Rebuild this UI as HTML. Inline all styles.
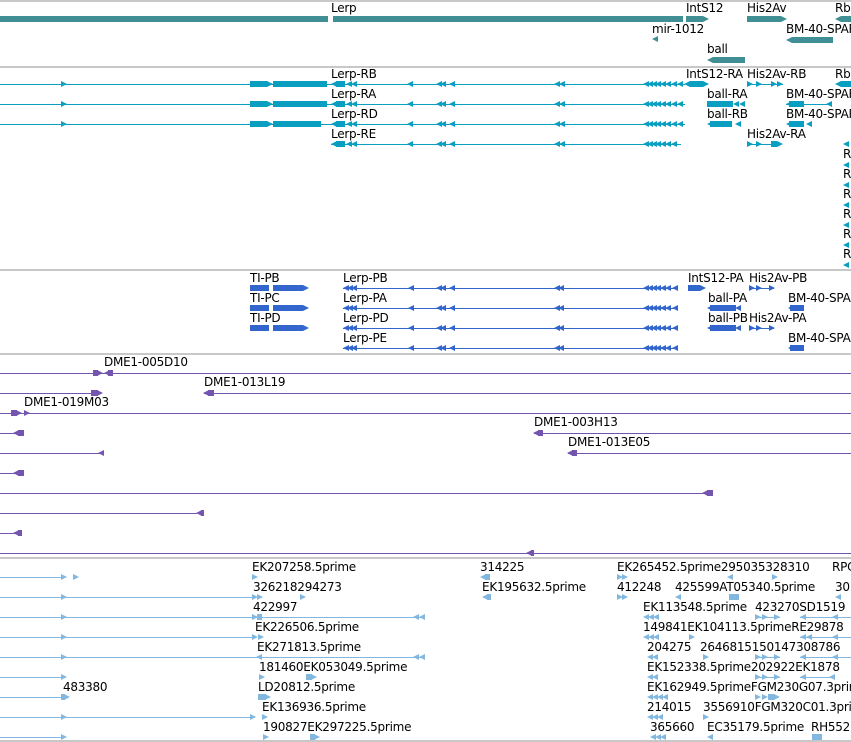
<!DOCTYPE html>
<html><head><meta charset="utf-8"><style>
body{margin:0;width:851px;height:742px;background:#fff;position:relative;overflow:hidden;font-family:"DejaVu Sans","Liberation Sans",sans-serif;}
div{position:absolute}
.t{font-size:12px;letter-spacing:-0.25px;line-height:13px;color:#000;white-space:nowrap;margin-top:1px}
.s{left:0;width:851px;height:2px;background:#c8c8c8}
.l{height:1px}
.b{height:6px}
.ar{width:0;height:0;border-left:6px solid currentColor;border-top:3px solid transparent;border-bottom:3px solid transparent}
.al{width:0;height:0;border-right:6px solid currentColor;border-top:3px solid transparent;border-bottom:3px solid transparent}
.c1{color:#3f8f94}.c1.l,.c1.b{background:#3f8f94}
.c2{color:#0a9fc0}.c2.l,.c2.b{background:#0a9fc0}
.c3{color:#3366cc}.c3.l,.c3.b{background:#3366cc}
.c4{color:#7355b0}.c4.l,.c4.b{background:#7355b0}
.c5{color:#82b8e0}.c5.l,.c5.b{background:#82b8e0}
.r{position:absolute;left:0;width:851px;height:6px}
.r>div{top:0}
</style></head><body>
<div class="s" style="top:0"></div>
<div class="s" style="top:66px"></div>
<div class="s" style="top:269px"></div>
<div class="s" style="top:353px"></div>
<div class="s" style="top:557px"></div>
<div class="s" style="top:740px"></div>

<!-- track 1 -->
<div class="t" style="left:331px;top:1px">Lerp</div>
<div class="b c1" style="left:0;top:16px;width:328px"></div>
<div class="b c1" style="left:333px;top:16px;width:350px"></div>
<div class="t" style="left:686px;top:1px">IntS12</div>
<div class="b c1" style="left:686px;top:16px;width:17px"></div><div class="ar c1" style="left:703px;top:16px"></div>
<div class="t" style="left:747px;top:1px">His2Av</div>
<div class="b c1" style="left:747px;top:16px;width:34px"></div><div class="ar c1" style="left:781px;top:16px"></div>
<div class="t" style="left:835px;top:1px">Rb</div>
<div class="al c1" style="left:835px;top:16px"></div><div class="b c1" style="left:841px;top:16px;width:10px"></div>
<div class="t" style="left:652px;top:22px">mir-1012</div>
<div class="al c1" style="left:652px;top:36px"></div>
<div class="t" style="left:786px;top:22px">BM-40-SPARC</div>
<div class="al c1" style="left:786px;top:37px"></div><div class="b c1" style="left:792px;top:37px;width:41px"></div>
<div class="t" style="left:707px;top:42px">ball</div>
<div class="al c1" style="left:707px;top:57px"></div><div class="b c1" style="left:713px;top:57px;width:32px"></div>

<!-- track 2 -->
<div class="t" style="left:331px;top:67px">Lerp-RB</div>
<div class="t" style="left:331px;top:87px">Lerp-RA</div>
<div class="t" style="left:331px;top:107px">Lerp-RD</div>
<div class="t" style="left:331px;top:127px">Lerp-RE</div>
<div class="l c2" style="left:0;top:84px;width:685px"></div>
<div class="l c2" style="left:0;top:104px;width:685px"></div>
<div class="l c2" style="left:0;top:124px;width:685px"></div>
<div class="l c2" style="left:331px;top:144px;width:350px"></div>
<div class="ar c2" style="left:61px;top:81px"></div><div class="ar c2" style="left:61px;top:101px"></div><div class="ar c2" style="left:61px;top:121px"></div>
<div class="b c2" style="left:250px;top:81px;width:17px"></div><div class="ar c2" style="left:267px;top:81px"></div><div class="b c2" style="left:273px;top:81px;width:54px"></div>
<div class="b c2" style="left:250px;top:101px;width:17px"></div><div class="ar c2" style="left:267px;top:101px"></div><div class="b c2" style="left:273px;top:101px;width:54px"></div>
<div class="b c2" style="left:250px;top:121px;width:17px"></div><div class="ar c2" style="left:267px;top:121px"></div><div class="b c2" style="left:273px;top:121px;width:48px"></div>
<div class="al c2" style="left:331px;top:81px"></div><div class="b c2" style="left:336px;top:81px;width:9px"></div>
<div class="al c2" style="left:331px;top:101px"></div><div class="b c2" style="left:336px;top:101px;width:9px"></div>
<div class="al c2" style="left:331px;top:121px"></div><div class="b c2" style="left:336px;top:121px;width:9px"></div>
<div class="al c2" style="left:331px;top:141px"></div><div class="b c2" style="left:336px;top:141px;width:9px"></div>
<!-- small arrows on transcripts -->
<div class="r c2" style="top:81px"><div class="al" style="left:346px"></div><div class="al" style="left:351px"></div><div class="al" style="left:407px"></div><div class="al" style="left:436px"></div><div class="al" style="left:440px"></div><div class="al" style="left:449px"></div><div class="al" style="left:554px"></div><div class="al" style="left:559px"></div><div class="al" style="left:643px"></div><div class="al" style="left:647px"></div><div class="al" style="left:651px"></div><div class="al" style="left:655px"></div><div class="al" style="left:660px"></div><div class="al" style="left:665px"></div><div class="al" style="left:671px"></div><div class="al" style="left:677px"></div></div>
<div class="r c2" style="top:101px"><div class="al" style="left:346px"></div><div class="al" style="left:351px"></div><div class="al" style="left:407px"></div><div class="al" style="left:436px"></div><div class="al" style="left:440px"></div><div class="al" style="left:449px"></div><div class="al" style="left:554px"></div><div class="al" style="left:559px"></div><div class="al" style="left:643px"></div><div class="al" style="left:647px"></div><div class="al" style="left:651px"></div><div class="al" style="left:655px"></div><div class="al" style="left:660px"></div><div class="al" style="left:665px"></div><div class="al" style="left:671px"></div><div class="al" style="left:677px"></div></div>
<div class="r c2" style="top:121px"><div class="al" style="left:346px"></div><div class="al" style="left:351px"></div><div class="al" style="left:407px"></div><div class="al" style="left:436px"></div><div class="al" style="left:440px"></div><div class="al" style="left:449px"></div><div class="al" style="left:554px"></div><div class="al" style="left:559px"></div><div class="al" style="left:643px"></div><div class="al" style="left:647px"></div><div class="al" style="left:651px"></div><div class="al" style="left:655px"></div><div class="al" style="left:660px"></div><div class="al" style="left:665px"></div><div class="al" style="left:671px"></div><div class="al" style="left:677px"></div></div>
<div class="r c2" style="top:141px"><div class="al" style="left:346px"></div><div class="al" style="left:351px"></div><div class="al" style="left:407px"></div><div class="al" style="left:436px"></div><div class="al" style="left:440px"></div><div class="al" style="left:449px"></div><div class="al" style="left:554px"></div><div class="al" style="left:559px"></div><div class="al" style="left:643px"></div><div class="al" style="left:647px"></div><div class="al" style="left:651px"></div><div class="al" style="left:655px"></div><div class="al" style="left:660px"></div><div class="al" style="left:665px"></div><div class="al" style="left:671px"></div><div class="b" style="left:675px;width:6px"></div></div>
<div class="t" style="left:686px;top:67px">IntS12-RA</div><div class="t" style="left:747px;top:67px">His2Av-RB</div><div class="t" style="left:835px;top:67px">Rb</div>
<div class="b c2" style="left:690px;top:81px;width:13px"></div><div class="ar c2" style="left:703px;top:81px"></div><div class="al c2" style="left:684px;top:81px"></div>
<div class="l c2" style="left:747px;top:84px;width:36px"></div>
<div class="ar c2" style="left:747px;top:81px"></div><div class="ar c2" style="left:756px;top:81px"></div><div class="ar c2" style="left:771px;top:81px"></div><div class="ar c2" style="left:777px;top:81px"></div>
<div class="al c2" style="left:835px;top:81px"></div><div class="b c2" style="left:841px;top:81px;width:10px"></div>
<div class="t" style="left:707px;top:87px">ball-RA</div><div class="t" style="left:786px;top:87px">BM-40-SPARC</div>
<div class="b c2" style="left:707px;top:101px;width:26px"></div><div class="al c2" style="left:733px;top:101px"></div><div class="al c2" style="left:739px;top:101px"></div>
<div class="l c2" style="left:786px;top:104px;width:45px"></div><div class="b c2" style="left:789px;top:101px;width:15px"></div><div class="al c2" style="left:786px;top:101px"></div><div class="al c2" style="left:826px;top:101px"></div>
<div class="t" style="left:707px;top:107px">ball-RB</div><div class="t" style="left:786px;top:107px">BM-40-SPARC</div>
<div class="b c2" style="left:710px;top:121px;width:22px"></div><div class="al c2" style="left:707px;top:121px"></div><div class="al c2" style="left:735px;top:121px"></div>
<div class="b c2" style="left:789px;top:121px;width:15px"></div><div class="al c2" style="left:786px;top:121px"></div><div class="al c2" style="left:806px;top:121px"></div>
<div class="t" style="left:747px;top:127px">His2Av-RA</div>
<div class="l c2" style="left:747px;top:144px;width:30px"></div><div class="ar c2" style="left:747px;top:141px"></div><div class="ar c2" style="left:756px;top:141px"></div><div class="b c2" style="left:771px;top:141px;width:6px"></div><div class="ar c2" style="left:777px;top:141px"></div>
<div class="t" style="left:843px;top:147px">R</div><div class="t" style="left:843px;top:167px">R</div><div class="t" style="left:843px;top:187px">R</div><div class="t" style="left:843px;top:207px">R</div><div class="t" style="left:843px;top:227px">R</div><div class="t" style="left:843px;top:247px">R</div>
<div class="al c2" style="left:843px;top:141px"></div>
<div class="al c2" style="left:843px;top:162px"></div><div class="al c2" style="left:843px;top:182px"></div><div class="al c2" style="left:843px;top:202px"></div><div class="al c2" style="left:843px;top:222px"></div><div class="al c2" style="left:843px;top:242px"></div><div class="al c2" style="left:843px;top:262px"></div>

<!-- track 3 -->
<div class="t" style="left:250px;top:271px">TI-PB</div><div class="t" style="left:250px;top:291px">TI-PC</div><div class="t" style="left:250px;top:311px">TI-PD</div>
<div class="b c3" style="left:250px;top:285px;width:19px"></div><div class="b c3" style="left:273px;top:285px;width:30px"></div><div class="ar c3" style="left:303px;top:285px"></div>
<div class="b c3" style="left:250px;top:305px;width:19px"></div><div class="b c3" style="left:273px;top:305px;width:30px"></div><div class="ar c3" style="left:303px;top:305px"></div>
<div class="b c3" style="left:250px;top:325px;width:19px"></div><div class="b c3" style="left:273px;top:325px;width:30px"></div><div class="ar c3" style="left:303px;top:325px"></div>
<div class="t" style="left:343px;top:271px">Lerp-PB</div><div class="t" style="left:343px;top:291px">Lerp-PA</div><div class="t" style="left:343px;top:311px">Lerp-PD</div><div class="t" style="left:343px;top:331px">Lerp-PE</div>
<div class="l c3" style="left:343px;top:288px;width:335px"></div><div class="l c3" style="left:343px;top:308px;width:335px"></div><div class="l c3" style="left:343px;top:328px;width:335px"></div><div class="l c3" style="left:343px;top:348px;width:335px"></div>
<div class="r c3" style="top:285px"><div class="al" style="left:343px"></div><div class="al" style="left:347px"></div><div class="al" style="left:351px"></div><div class="al" style="left:408px"></div><div class="al" style="left:436px"></div><div class="al" style="left:440px"></div><div class="al" style="left:449px"></div><div class="al" style="left:554px"></div><div class="al" style="left:558px"></div><div class="al" style="left:643px"></div><div class="al" style="left:647px"></div><div class="al" style="left:651px"></div><div class="al" style="left:655px"></div><div class="al" style="left:660px"></div><div class="al" style="left:665px"></div><div class="al" style="left:672px"></div></div>
<div class="r c3" style="top:305px"><div class="al" style="left:343px"></div><div class="al" style="left:347px"></div><div class="al" style="left:351px"></div><div class="al" style="left:408px"></div><div class="al" style="left:436px"></div><div class="al" style="left:440px"></div><div class="al" style="left:449px"></div><div class="al" style="left:554px"></div><div class="al" style="left:558px"></div><div class="al" style="left:643px"></div><div class="al" style="left:647px"></div><div class="al" style="left:651px"></div><div class="al" style="left:655px"></div><div class="al" style="left:660px"></div><div class="al" style="left:665px"></div><div class="al" style="left:672px"></div></div>
<div class="r c3" style="top:325px"><div class="al" style="left:343px"></div><div class="al" style="left:347px"></div><div class="al" style="left:351px"></div><div class="al" style="left:408px"></div><div class="al" style="left:436px"></div><div class="al" style="left:440px"></div><div class="al" style="left:449px"></div><div class="al" style="left:554px"></div><div class="al" style="left:558px"></div><div class="al" style="left:643px"></div><div class="al" style="left:647px"></div><div class="al" style="left:651px"></div><div class="al" style="left:655px"></div><div class="al" style="left:660px"></div><div class="al" style="left:665px"></div><div class="al" style="left:672px"></div></div>
<div class="r c3" style="top:345px"><div class="al" style="left:343px"></div><div class="al" style="left:347px"></div><div class="al" style="left:351px"></div><div class="al" style="left:408px"></div><div class="al" style="left:436px"></div><div class="al" style="left:440px"></div><div class="al" style="left:449px"></div><div class="al" style="left:554px"></div><div class="al" style="left:558px"></div><div class="al" style="left:643px"></div><div class="al" style="left:647px"></div><div class="al" style="left:651px"></div><div class="al" style="left:655px"></div><div class="al" style="left:660px"></div><div class="al" style="left:665px"></div><div class="al" style="left:672px"></div></div>
<div class="t" style="left:688px;top:271px">IntS12-PA</div><div class="t" style="left:749px;top:271px">His2Av-PB</div>
<div class="b c3" style="left:688px;top:285px;width:12px"></div><div class="ar c3" style="left:700px;top:285px"></div>
<div class="l c3" style="left:749px;top:288px;width:25px"></div><div class="ar c3" style="left:749px;top:285px"></div><div class="ar c3" style="left:756px;top:285px"></div><div class="ar c3" style="left:769px;top:285px"></div>
<div class="t" style="left:708px;top:291px">ball-PA</div><div class="t" style="left:788px;top:291px">BM-40-SPARC</div>
<div class="b c3" style="left:710px;top:305px;width:26px"></div><div class="al c3" style="left:707px;top:305px"></div><div class="al c3" style="left:735px;top:305px"></div>
<div class="b c3" style="left:790px;top:305px;width:14px"></div><div class="al c3" style="left:788px;top:305px"></div>
<div class="t" style="left:708px;top:311px">ball-PB</div><div class="t" style="left:749px;top:311px">His2Av-PA</div>
<div class="b c3" style="left:710px;top:325px;width:26px"></div><div class="al c3" style="left:707px;top:325px"></div><div class="al c3" style="left:735px;top:325px"></div>
<div class="l c3" style="left:749px;top:328px;width:25px"></div><div class="ar c3" style="left:749px;top:325px"></div><div class="ar c3" style="left:756px;top:325px"></div><div class="ar c3" style="left:769px;top:325px"></div>
<div class="t" style="left:788px;top:331px">BM-40-SPARC</div>
<div class="b c3" style="left:790px;top:345px;width:14px"></div><div class="al c3" style="left:788px;top:345px"></div>

<!-- track 4 -->
<div class="t" style="left:104px;top:355px">DME1-005D10</div>
<div class="l c4" style="left:0;top:373px;width:851px"></div><div class="b c4" style="left:93px;top:370px;width:5px"></div><div class="ar c4" style="left:97px;top:370px"></div><div class="al c4" style="left:104px;top:370px"></div><div class="b c4" style="left:108px;top:370px;width:5px"></div>
<div class="t" style="left:204px;top:375px">DME1-013L19</div>
<div class="l c4" style="left:0;top:393px;width:92px"></div><div class="b c4" style="left:91px;top:390px;width:7px"></div><div class="ar c4" style="left:97px;top:390px"></div>
<div class="l c4" style="left:204px;top:393px;width:647px"></div><div class="al c4" style="left:203px;top:390px"></div><div class="b c4" style="left:208px;top:390px;width:6px"></div>
<div class="t" style="left:24px;top:395px">DME1-019M03</div>
<div class="l c4" style="left:0;top:413px;width:851px"></div><div class="b c4" style="left:11px;top:410px;width:6px"></div><div class="ar c4" style="left:16px;top:410px"></div><div class="ar c4" style="left:24px;top:410px"></div>
<div class="l c4" style="left:0;top:433px;width:16px"></div><div class="al c4" style="left:13px;top:430px"></div><div class="b c4" style="left:18px;top:430px;width:6px"></div>
<div class="t" style="left:534px;top:415px">DME1-003H13</div>
<div class="l c4" style="left:534px;top:433px;width:317px"></div><div class="al c4" style="left:533px;top:430px"></div><div class="b c4" style="left:538px;top:430px;width:5px"></div>
<div class="l c4" style="left:0;top:453px;width:100px"></div><div class="al c4" style="left:98px;top:450px"></div>
<div class="t" style="left:568px;top:435px">DME1-013E05</div>
<div class="l c4" style="left:568px;top:453px;width:283px"></div><div class="al c4" style="left:567px;top:450px"></div><div class="b c4" style="left:572px;top:450px;width:5px"></div>
<div class="l c4" style="left:0;top:473px;width:16px"></div><div class="al c4" style="left:13px;top:470px"></div><div class="b c4" style="left:18px;top:470px;width:6px"></div>
<div class="l c4" style="left:0;top:493px;width:705px"></div><div class="al c4" style="left:702px;top:490px"></div><div class="b c4" style="left:707px;top:490px;width:6px"></div>
<div class="l c4" style="left:0;top:513px;width:197px"></div><div class="al c4" style="left:196px;top:510px"></div><div class="b c4" style="left:201px;top:510px;width:3px"></div>
<div class="l c4" style="left:0;top:533px;width:16px"></div><div class="al c4" style="left:13px;top:530px"></div><div class="b c4" style="left:18px;top:530px;width:4px"></div>
<div class="l c4" style="left:0;top:553px;width:851px"></div><div class="al c4" style="left:526px;top:550px"></div><div class="b c4" style="left:531px;top:550px;width:3px"></div>

<!-- track 5 -->
<div class="l c5" style="left:0;top:577px;width:63px"></div><div class="ar c5" style="left:61px;top:574px"></div><div class="ar c5" style="left:73px;top:574px"></div>
<div class="l c5" style="left:0;top:597px;width:255px"></div><div class="ar c5" style="left:61px;top:594px"></div>
<div class="l c5" style="left:0;top:617px;width:425px"></div><div class="ar c5" style="left:61px;top:614px"></div><div class="al c5" style="left:413px;top:614px"></div><div class="al c5" style="left:419px;top:614px"></div>
<div class="l c5" style="left:0;top:637px;width:255px"></div><div class="ar c5" style="left:61px;top:634px"></div>
<div class="l c5" style="left:0;top:657px;width:425px"></div><div class="ar c5" style="left:61px;top:654px"></div><div class="al c5" style="left:413px;top:654px"></div><div class="al c5" style="left:419px;top:654px"></div>
<div class="l c5" style="left:0;top:677px;width:63px"></div><div class="ar c5" style="left:61px;top:674px"></div>
<div class="l c5" style="left:0;top:697px;width:63px"></div><div class="b c5" style="left:61px;top:694px;width:4px"></div><div class="ar c5" style="left:64px;top:694px"></div>
<div class="l c5" style="left:0;top:717px;width:255px"></div><div class="ar c5" style="left:61px;top:714px"></div><div class="ar c5" style="left:250px;top:714px"></div>
<div class="l c5" style="left:0;top:737px;width:63px"></div><div class="ar c5" style="left:61px;top:734px"></div>

<div class="t" style="left:252px;top:560px">EK207258.5prime</div>
<div class="t" style="left:480px;top:560px">314225</div>
<div class="t" style="left:617px;top:560px">EK265452.5prime295035328310</div>
<div class="t" style="left:832px;top:560px">RPC</div>
<div class="t" style="left:253px;top:580px">326218294273</div>
<div class="t" style="left:482px;top:580px">EK195632.5prime</div>
<div class="t" style="left:617px;top:580px">412248</div>
<div class="t" style="left:675px;top:580px">425599AT05340.5prime</div>
<div class="t" style="left:835px;top:580px">30</div>
<div class="t" style="left:253px;top:600px">422997</div>
<div class="t" style="left:643px;top:600px">EK113548.5prime</div>
<div class="t" style="left:755px;top:600px">423270SD1519</div>
<div class="t" style="left:255px;top:620px">EK226506.5prime</div>
<div class="t" style="left:643px;top:620px">149841EK104113.5primeRE29878</div>
<div class="t" style="left:257px;top:640px">EK271813.5prime</div>
<div class="t" style="left:647px;top:640px">204275</div>
<div class="t" style="left:700px;top:640px">2646815150147308786</div>
<div class="t" style="left:259px;top:660px">181460EK053049.5prime</div>
<div class="t" style="left:647px;top:660px">EK152338.5prime202922EK1878</div>
<div class="t" style="left:63px;top:680px">483380</div>
<div class="t" style="left:258px;top:680px">LD20812.5prime</div>
<div class="t" style="left:647px;top:680px">EK162949.5primeFGM230G07.3prime</div>
<div class="t" style="left:262px;top:700px">EK136936.5prime</div>
<div class="t" style="left:647px;top:700px">214015</div>
<div class="t" style="left:703px;top:700px">3556910FGM320C01.3prime</div>
<div class="t" style="left:263px;top:720px">190827EK297225.5prime</div>
<div class="t" style="left:650px;top:720px">365660</div>
<div class="t" style="left:707px;top:720px">EC35179.5prime</div>
<div class="t" style="left:811px;top:720px">RH552</div>

<!-- track5 small glyphs -->
<div class="ar c5" style="left:252px;top:574px"></div>
<div class="al c5" style="left:480px;top:574px"></div><div class="b c5" style="left:485px;top:574px;width:5px"></div>
<div class="ar c5" style="left:617px;top:574px"></div><div class="ar c5" style="left:622px;top:574px"></div>
<div class="al c5" style="left:727px;top:574px"></div><div class="ar c5" style="left:772px;top:574px"></div>
<div class="ar c5" style="left:252px;top:594px"></div><div class="ar c5" style="left:257px;top:594px"></div><div class="ar c5" style="left:300px;top:594px"></div>
<div class="al c5" style="left:482px;top:594px"></div><div class="b c5" style="left:487px;top:594px;width:4px"></div>
<div class="ar c5" style="left:617px;top:594px"></div><div class="ar c5" style="left:622px;top:594px"></div>
<div class="al c5" style="left:675px;top:594px"></div><div class="b c5" style="left:729px;top:594px;width:10px"></div><div class="al c5" style="left:835px;top:594px"></div>
<div class="ar c5" style="left:252px;top:614px"></div><div class="b c5" style="left:257px;top:614px;width:5px"></div>
<div class="al c5" style="left:643px;top:614px"></div><div class="al c5" style="left:648px;top:614px"></div><div class="al c5" style="left:653px;top:614px"></div>
<div class="l c5" style="left:755px;top:617px;width:25px"></div><div class="ar c5" style="left:755px;top:614px"></div><div class="ar c5" style="left:762px;top:614px"></div><div class="ar c5" style="left:774px;top:614px"></div>
<div class="l c5" style="left:800px;top:617px;width:51px"></div><div class="al c5" style="left:800px;top:614px"></div><div class="al c5" style="left:832px;top:614px"></div>
<div class="ar c5" style="left:252px;top:634px"></div><div class="ar c5" style="left:258px;top:634px"></div>
<div class="al c5" style="left:643px;top:634px"></div><div class="al c5" style="left:648px;top:634px"></div><div class="al c5" style="left:653px;top:634px"></div><div class="ar c5" style="left:689px;top:634px"></div>
<div class="l c5" style="left:800px;top:637px;width:51px"></div><div class="al c5" style="left:800px;top:634px"></div><div class="al c5" style="left:806px;top:634px"></div><div class="al c5" style="left:832px;top:634px"></div>
<div class="al c5" style="left:256px;top:654px"></div>
<div class="al c5" style="left:647px;top:654px"></div><div class="al c5" style="left:652px;top:654px"></div><div class="ar c5" style="left:703px;top:654px"></div>
<div class="l c5" style="left:755px;top:657px;width:25px"></div><div class="ar c5" style="left:755px;top:654px"></div><div class="ar c5" style="left:762px;top:654px"></div><div class="ar c5" style="left:774px;top:654px"></div>
<div class="l c5" style="left:800px;top:657px;width:51px"></div><div class="al c5" style="left:800px;top:654px"></div><div class="al c5" style="left:832px;top:654px"></div>
<div class="ar c5" style="left:259px;top:674px"></div><div class="b c5" style="left:306px;top:674px;width:6px"></div><div class="ar c5" style="left:311px;top:674px"></div>
<div class="al c5" style="left:647px;top:674px"></div><div class="al c5" style="left:652px;top:674px"></div>
<div class="l c5" style="left:755px;top:677px;width:25px"></div><div class="ar c5" style="left:755px;top:674px"></div><div class="ar c5" style="left:762px;top:674px"></div><div class="ar c5" style="left:774px;top:674px"></div>
<div class="l c5" style="left:800px;top:677px;width:35px"></div><div class="al c5" style="left:800px;top:674px"></div><div class="al c5" style="left:829px;top:674px"></div>
<div class="b c5" style="left:258px;top:694px;width:8px"></div><div class="ar c5" style="left:265px;top:694px"></div>
<div class="al c5" style="left:647px;top:694px"></div><div class="al c5" style="left:652px;top:694px"></div><div class="al c5" style="left:657px;top:694px"></div><div class="al c5" style="left:662px;top:694px"></div>
<div class="ar c5" style="left:755px;top:694px"></div><div class="ar c5" style="left:762px;top:694px"></div><div class="b c5" style="left:768px;top:694px;width:6px"></div><div class="ar c5" style="left:774px;top:694px"></div>
<div class="ar c5" style="left:262px;top:714px"></div>
<div class="al c5" style="left:647px;top:714px"></div><div class="al c5" style="left:652px;top:714px"></div><div class="al c5" style="left:657px;top:714px"></div><div class="ar c5" style="left:703px;top:714px"></div>
<div class="ar c5" style="left:263px;top:734px"></div><div class="b c5" style="left:310px;top:734px;width:5px"></div><div class="ar c5" style="left:314px;top:734px"></div>
<div class="al c5" style="left:650px;top:734px"></div><div class="al c5" style="left:655px;top:734px"></div><div class="al c5" style="left:660px;top:734px"></div>
<div class="al c5" style="left:707px;top:734px"></div><div class="b c5" style="left:812px;top:734px;width:10px"></div>
</body></html>
